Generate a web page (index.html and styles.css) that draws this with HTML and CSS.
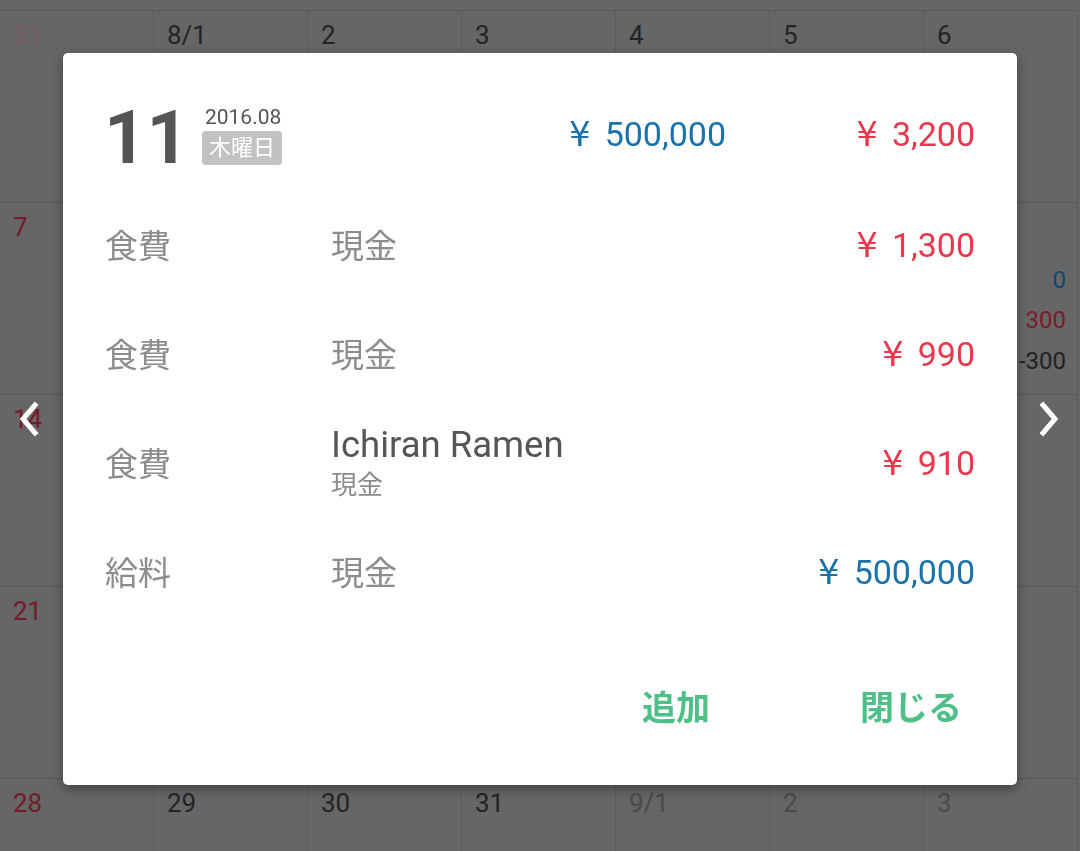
FILE: index.html
```html
<!DOCTYPE html>
<html lang="ja">
<head>
<meta charset="utf-8">
<title>カレンダー</title>
<link rel="stylesheet" href="styles.css">
</head>
<body>
<div class="calendar">
  <div class="cell sun other">31</div>
  <div class="cell">8/1</div>
  <div class="cell">2</div>
  <div class="cell">3</div>
  <div class="cell">4</div>
  <div class="cell">5</div>
  <div class="cell">6</div>

  <div class="cell sun">7</div>
  <div class="cell">8</div>
  <div class="cell">9</div>
  <div class="cell">10</div>
  <div class="cell">11</div>
  <div class="cell">12</div>
  <div class="cell"><span>13</span>
    <div class="sum"><span class="in">0</span><span class="out">300</span><span class="net">-300</span></div>
  </div>

  <div class="cell sun">14</div>
  <div class="cell">15</div>
  <div class="cell">16</div>
  <div class="cell">17</div>
  <div class="cell">18</div>
  <div class="cell">19</div>
  <div class="cell">20</div>

  <div class="cell sun">21</div>
  <div class="cell">22</div>
  <div class="cell">23</div>
  <div class="cell">24</div>
  <div class="cell">25</div>
  <div class="cell">26</div>
  <div class="cell">27</div>

  <div class="cell sun">28</div>
  <div class="cell">29</div>
  <div class="cell">30</div>
  <div class="cell">31</div>
  <div class="cell other">9/1</div>
  <div class="cell other">2</div>
  <div class="cell other">3</div>
</div>

<div class="overlay">
  <svg class="nav nav-prev" width="26" height="40" viewBox="0 0 26 40"><polyline points="18,6 6,20 18,34" fill="none" stroke="#fff" stroke-width="5" stroke-linecap="square"/></svg>
  <svg class="nav nav-next" width="26" height="40" viewBox="0 0 26 40"><polyline points="8,6 20,20 8,34" fill="none" stroke="#fff" stroke-width="5" stroke-linecap="square"/></svg>

  <div class="dialog">
    <div class="head">
      <div class="day">11</div>
      <div class="date">
        <div class="ym">2016.08</div>
        <div class="wd">木曜日</div>
      </div>
      <div class="total income"><span class="yen">¥</span>500,000</div>
      <div class="total expense"><span class="yen">¥</span>3,200</div>
    </div>

    <div class="row">
      <div class="cat">食費</div>
      <div class="acct">現金</div>
      <div class="amt expense"><span class="yen">¥</span>1,300</div>
    </div>
    <div class="row">
      <div class="cat">食費</div>
      <div class="acct">現金</div>
      <div class="amt expense"><span class="yen">¥</span>990</div>
    </div>
    <div class="row">
      <div class="cat">食費</div>
      <div class="acct two">
        <div class="memo">Ichiran Ramen</div>
        <div class="sub">現金</div>
      </div>
      <div class="amt expense"><span class="yen">¥</span>910</div>
    </div>
    <div class="row">
      <div class="cat">給料</div>
      <div class="acct">現金</div>
      <div class="amt income"><span class="yen">¥</span>500,000</div>
    </div>

    <div class="actions">
      <button class="btn">追加</button>
      <button class="btn">閉じる</button>
    </div>
  </div>
</div>
</body>
</html>
```

FILE: styles.css
```css
html, body {
  margin: 0;
  padding: 0;
  width: 1080px;
  height: 851px;
  overflow: hidden;
  background: #666666;
  font-family: Roboto, "Noto Sans CJK JP", sans-serif;
}

.calendar {
  display: grid;
  grid-template-columns: repeat(7, 154px);
  grid-auto-rows: 192px;
  padding-top: 10px;
  height: 841px;
  overflow: hidden;
}

.cell {
  display: flex;
  flex-direction: column;
  border-top: 1px solid #575757;
  border-right: 1px solid #5c5c5c;
  padding: 9px 11px 13px 13px;
  font-size: 26px;
  line-height: 1.2;
  color: #242424;
}

.cell.sun { color: #751a28; }
.cell.other { color: #4a4a4a; }
.cell.sun.other { color: #7a5c60; }

.sum {
  margin-top: auto;
  display: flex;
  flex-direction: column;
  align-items: flex-end;
  font-size: 24px;
  line-height: 40.5px;
}
.sum .in { color: #0e4a6e; }
.sum .out { color: #7a1c2a; }
.sum .net { color: #222222; }

.overlay {
  position: fixed;
  inset: 0;
  display: flex;
  justify-content: center;
  align-items: flex-start;
  padding-top: 53px;
}

.nav {
  position: absolute;
  top: 399px;
}
.nav-prev { left: 17px; }
.nav-next { left: 1035px; }

.dialog {
  width: 954px;
  height: 732px;
  box-sizing: border-box;
  background: #ffffff;
  border-radius: 5px;
  box-shadow: 0 4px 12px rgba(0, 0, 0, 0.35);
  padding: 27px 42px 0 42px;
  display: flex;
  flex-direction: column;
}

.head {
  height: 109px;
  display: flex;
  align-items: center;
}

.day {
  font-size: 74px;
  font-weight: 700;
  color: #555555;
  line-height: 1;
  margin-left: -1px;
  margin-top: 6px;
}

.date {
  margin-left: 13px;
  display: flex;
  flex-direction: column;
  align-items: flex-start;
}

.ym {
  font-size: 21px;
  line-height: 24px;
  color: #555555;
  margin-left: 3px;
}

.wd {
  margin-top: 2px;
  background: #c2c2c2;
  color: #ffffff;
  font-size: 22px;
  line-height: 34px;
  padding: 0 7px;
  border-radius: 4px;
}

.total {
  font-size: 34px;
  text-align: right;
}
.head .total { margin-top: -2px; }
.head .income { flex: 1; }
.head .expense { width: 249px; }

.yen {
  font-family: "DejaVu Sans", sans-serif;
  margin-right: 14px;
}

.income { color: #1a72aa; }
.expense { color: #e8394c; }

.row {
  height: 109px;
  display: grid;
  grid-template-columns: 226px 1fr auto;
  align-items: center;
}

.cat, .acct {
  font-size: 33px;
  color: #8c8c8c;
}

.acct.two { padding-top: 3px; }

.memo {
  font-size: 36.5px;
  color: #555555;
  line-height: 42px;
}
.sub {
  margin-top: 1px;
  font-size: 26px;
  color: #8c8c8c;
  line-height: 36px;
}

.amt {
  font-size: 34px;
  text-align: right;
  padding-top: 3px;
}

.actions {
  flex: 1;
  display: flex;
  justify-content: flex-end;
  align-items: center;
  gap: 150px;
  padding-right: 13px;
  padding-top: 2px;
}

.btn {
  border: none;
  background: none;
  padding: 0;
  margin: 0;
  font-family: "Noto Sans CJK JP", sans-serif;
  font-size: 34px;
  font-weight: 700;
  color: #4fbf88;
  line-height: 1.2;
}
```
